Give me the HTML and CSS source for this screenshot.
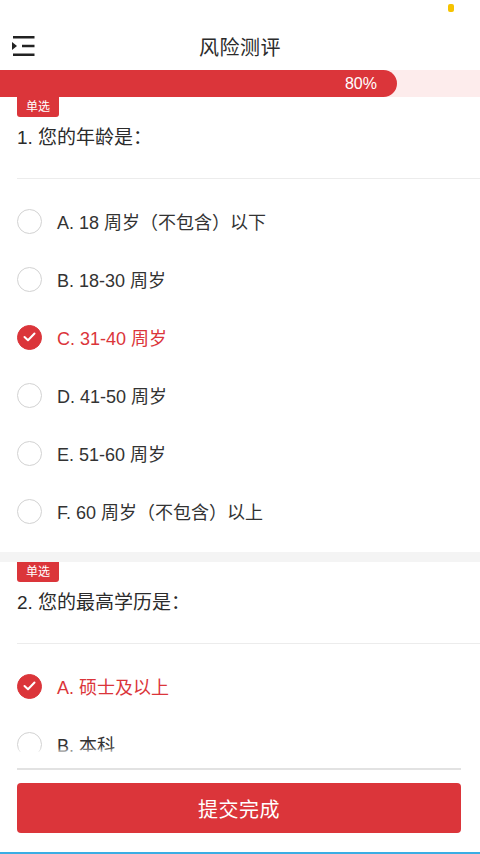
FILE: index.html
```html
<!DOCTYPE html>
<html lang="zh-CN">
<head>
  <meta charset="UTF-8">
  <meta content="width=device-width, initial-scale=1.0" name="viewport">
  <title>风险测评</title>
  <link rel="stylesheet" href="styles.css">
</head>
<body>
  <div class="app">
    <div class="status-bar"><span class="status-dot"></span></div>

    <header class="topbar">
      <button class="menu-btn" type="button" aria-label="菜单">
        <svg width="24" height="22" viewBox="0 0 24 22">
          <path d="M1 2.2H22.5M10 11H22.5M1 19.8H22.5" stroke="#222" stroke-width="2.4" fill="none"/>
          <path d="M0 7L5 11L0 15Z" fill="#222"/>
        </svg>
      </button>
      <h1 class="topbar-title">风险测评</h1>
      <span></span>
    </header>

    <div class="progress">
      <div class="progress-fill" style="width: 82.7%">80%</div>
    </div>

    <main class="content">
      <section class="question">
        <span class="tag">单选</span>
        <h2 class="q-title">1. 您的年龄是：</h2>
        <ul class="options">
          <li class="option"><span class="radio"></span>A. 18 周岁（不包含）以下</li>
          <li class="option"><span class="radio"></span>B. 18-30 周岁</li>
          <li class="option is-checked"><span class="radio"><svg width="13" height="10" viewBox="0 0 13 10"><path d="M1.5 5L5 8.3L11.5 1.5" stroke="#fff" stroke-width="2" fill="none" stroke-linecap="round" stroke-linejoin="round"/></svg></span>C. 31-40 周岁</li>
          <li class="option"><span class="radio"></span>D. 41-50 周岁</li>
          <li class="option"><span class="radio"></span>E. 51-60 周岁</li>
          <li class="option"><span class="radio"></span>F. 60 周岁（不包含）以上</li>
        </ul>
      </section>

      <section class="question">
        <span class="tag">单选</span>
        <h2 class="q-title">2. 您的最高学历是：</h2>
        <ul class="options">
          <li class="option is-checked"><span class="radio"><svg width="13" height="10" viewBox="0 0 13 10"><path d="M1.5 5L5 8.3L11.5 1.5" stroke="#fff" stroke-width="2" fill="none" stroke-linecap="round" stroke-linejoin="round"/></svg></span>A. 硕士及以上</li>
          <li class="option"><span class="radio"></span>B. 本科</li>
        </ul>
      </section>
    </main>

    <footer class="footer">
      <div class="footer-line"></div>
      <button class="submit-btn" type="button">提交完成</button>
    </footer>
  </div>
</body>
</html>
```

FILE: styles.css
```css
* {
    box-sizing: border-box;
}
body {
    margin: 0;
    font-family: "Liberation Sans", "Noto Sans CJK SC", sans-serif;
    color: #333;
    background: #fff;
}
.app {
    height: 100vh;
    display: flex;
    flex-direction: column;
    overflow: hidden;
}
.status-bar {
    height: 22px;
    display: flex;
    justify-content: flex-end;
    padding: 4px 26px 0 0;
}
.status-dot {
    width: 6px;
    height: 8px;
    border-radius: 2px;
    background: #f6c300;
}
.topbar {
    height: 48px;
    display: grid;
    grid-template-columns: 1fr auto 1fr;
    align-items: center;
    padding: 0 12px;
}
.menu-btn {
    border: none;
    background: none;
    padding: 0;
    width: 24px;
    height: 22px;
    display: flex;
}
.topbar-title {
    margin: 0;
    font-size: 20px;
    font-weight: normal;
    color: #2b2b2b;
    letter-spacing: 0.5px;
}
.progress {
    height: 27px;
    flex-shrink: 0;
    background: #fdecec;
}
.progress-fill {
    height: 100%;
    background: #db353a;
    border-radius: 0 14px 14px 0;
    color: #fff;
    font-size: 16px;
    line-height: 27px;
    text-align: right;
    padding-right: 20px;
}
.content {
    flex: 1;
    overflow: hidden;
}
.question + .question {
    border-top: 10px solid #f4f4f4;
}
.tag {
    display: inline-block;
    margin-left: 17px;
    width: 42px;
    height: 20px;
    line-height: 20px;
    text-align: center;
    font-size: 12px;
    color: #fff;
    background: #db353a;
    border-radius: 0 0 3px 3px;
}
.q-title {
    margin: 0 0 0 17px;
    padding: 8px 0 27px;
    line-height: 26px;
    font-size: 19px;
    font-weight: normal;
    color: #2b2b2b;
    border-bottom: 1px solid #ececec;
}
.options {
    list-style: none;
    margin: 0;
    padding: 13px 0 12px;
}
.option {
    height: 58px;
    display: flex;
    align-items: center;
    padding-left: 17px;
    font-size: 18px;
    color: #333;
}
.radio {
    width: 25px;
    height: 25px;
    border-radius: 50%;
    border: 1.5px solid #d2d2d2;
    margin-right: 15px;
    display: flex;
    align-items: center;
    justify-content: center;
    flex-shrink: 0;
}
.is-checked {
    color: #db353a;
}
.is-checked .radio {
    border-color: #db353a;
    background: #db353a;
}
.footer {
    height: 102px;
    flex-shrink: 0;
    background: #fff;
    padding: 16px 19px 0 17px;
    border-bottom: 2px solid #3aade4;
    box-shadow: 0 -2px 4px rgba(255, 255, 255, 0.8);
    position: relative;
}
.footer-line {
    height: 2px;
    background: #e2e2e2;
}
.submit-btn {
    display: block;
    width: 100%;
    height: 50px;
    margin-top: 13px;
    border: none;
    border-radius: 4px;
    background: #db353a;
    color: #fff;
    font-family: inherit;
    font-size: 20px;
    letter-spacing: 0.5px;
}
```
